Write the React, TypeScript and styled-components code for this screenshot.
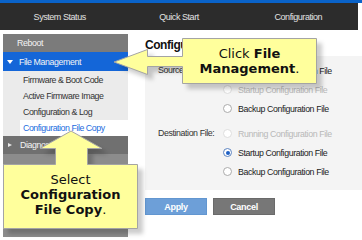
import React from "react";
import styled, { createGlobalStyle } from "styled-components";

const GlobalStyle = createGlobalStyle`
  html, body {
    margin: 0;
    padding: 0;
    background: #ffffff;
  }
  body {
    font-family: "Liberation Sans", Arial, sans-serif;
    overflow: hidden;
  }
`;

const Page = styled.div`
  position: relative;
  width: 362px;
  height: 240px;
  overflow: hidden;
  background: #fff;
`;

const TopStrip = styled.div`
  height: 3px;
  background: #0a63c9;
`;

const NavBar = styled.nav`
  display: grid;
  grid-template-columns: repeat(3, 1fr);
  width: 358px;
  height: 27px;
  background: #2c2c2c;
`;

const NavTab = styled.div`
  display: flex;
  align-items: center;
  justify-content: center;
  color: #e2e2e2;
  font-size: 9px;
  letter-spacing: -0.45px;
`;

const Body = styled.div`
  display: flex;
  gap: 17px;
  padding-top: 4px;
`;

const Sidebar = styled.aside`
  display: flex;
  flex-direction: column;
  width: 125px;
  height: 203px;
  margin-left: 3px;
  background: #8c8c8c;
`;

const MenuHeader = styled.div<{ $tone: "gray" | "active" | "dark"; $h: number }>`
  display: flex;
  align-items: center;
  gap: 6px;
  height: ${(p) => p.$h}px;
  padding-left: ${(p) => (p.$tone === "gray" ? 14 : 4)}px;
  color: #f4f4f4;
  font-size: 8.8px;
  letter-spacing: -0.4px;
  white-space: nowrap;
  background: ${(p) =>
    p.$tone === "active" ? "#1466d8" : p.$tone === "dark" ? "#707070" : "#7b7b7b"};
`;

const Caret = styled.span<{ $open: boolean }>`
  width: 0;
  height: 0;
  margin-left: ${(p) => (p.$open ? 0 : 1)}px;
  margin-right: ${(p) => (p.$open ? 0 : 2)}px;
  border-style: solid;
  border-color: transparent;
  ${(p) =>
    p.$open
      ? "border-width: 4px 3px 0 3px; border-top-color: #fff;"
      : "border-width: 2.5px 0 2.5px 4px; border-left-color: #e8e8e8;"}
`;

const SubMenu = styled.div`
  display: flex;
  flex-direction: column;
  padding: 1px 0 0 17px;
  background: #ebebeb;
`;

const SubItem = styled.div<{ $active?: boolean }>`
  height: 16px;
  padding-left: 3px;
  line-height: 16px;
  font-size: 8.8px;
  letter-spacing: -0.45px;
  white-space: nowrap;
  color: ${(p) => (p.$active ? "#1a6be0" : "#333")};
  background: ${(p) => (p.$active ? "#ffffff" : "transparent")};
`;

const Main = styled.main`
  flex: 1;
  display: flex;
  flex-direction: column;
`;

const Title = styled.h1`
  margin: 0;
  height: 22px;
  line-height: 22px;
  font-size: 12px;
  letter-spacing: -0.45px;
  font-weight: bold;
  color: #111;
  white-space: nowrap;
`;

const Panel = styled.section`
  display: flex;
  flex-direction: column;
  gap: 6px;
  padding: 5px 0 9px 13px;
  background: #f4f4f4;
`;

const FieldRow = styled.div`
  display: grid;
  grid-template-columns: 65px 1fr;
`;

const Label = styled.div`
  height: 19px;
  line-height: 19px;
  font-size: 8.8px;
  letter-spacing: -0.4px;
  white-space: nowrap;
  color: #333;
`;

const Options = styled.div`
  display: flex;
  flex-direction: column;
`;

const Option = styled.label<{ $disabled?: boolean }>`
  display: flex;
  align-items: center;
  gap: 6px;
  height: 19px;
  font-size: 8.8px;
  letter-spacing: -0.4px;
  white-space: nowrap;
  color: ${(p) => (p.$disabled ? "#b8b8b8" : "#222")};
`;

const Radio = styled.span<{ $checked?: boolean; $disabled?: boolean }>`
  position: relative;
  box-sizing: border-box;
  width: 9px;
  height: 9px;
  border-radius: 50%;
  background: #fff;
  border: 1px solid
    ${(p) => (p.$checked ? "#5b83c0" : p.$disabled ? "#dedede" : "#ababab")};
  &::after {
    content: "";
    display: ${(p) => (p.$checked ? "block" : "none")};
    position: absolute;
    left: 1.5px;
    top: 1.5px;
    width: 4px;
    height: 4px;
    border-radius: 50%;
    background: #1d5fc4;
  }
`;

const Actions = styled.div`
  display: flex;
  gap: 6px;
  margin-top: 8px;
`;

const Button = styled.button<{ $primary?: boolean }>`
  width: 62px;
  height: 17px;
  padding: 0;
  border: 1px solid ${(p) => (p.$primary ? "#6296d0" : "#6a6a6a")};
  background: ${(p) => (p.$primary ? "#6d9fd8" : "#777777")};
  color: #fff;
  font-family: inherit;
  font-size: 9px;
  letter-spacing: -0.3px;
  font-weight: bold;
`;

const CalloutWrap = styled.div<{ $x: number; $y: number; $w: number; $h: number }>`
  position: absolute;
  left: ${(p) => p.$x}px;
  top: ${(p) => p.$y}px;
  width: ${(p) => p.$w}px;
  height: ${(p) => p.$h}px;
`;

const CalloutShape = styled.svg`
  position: absolute;
  inset: 0;
  overflow: visible;
  filter: drop-shadow(5px 5px 2px rgba(0, 0, 0, 0.2));
`;

const CalloutText = styled.div<{ $x: number; $y: number; $w: number; $h: number }>`
  position: absolute;
  left: ${(p) => p.$x}px;
  top: ${(p) => p.$y}px;
  width: ${(p) => p.$w}px;
  height: ${(p) => p.$h}px;
  display: flex;
  flex-direction: column;
  align-items: center;
  justify-content: center;
  font-family: "DejaVu Sans", Verdana, sans-serif;
  font-size: 13px;
  line-height: 15px;
  color: #111;
  text-align: center;
`;

type Box = { x: number; y: number; w: number; h: number };

const Callout = ({
  frame,
  box,
  path,
  children,
}: {
  frame: Box;
  box: Box;
  path: string;
  children: React.ReactNode;
}) => (
  <CalloutWrap $x={frame.x} $y={frame.y} $w={frame.w} $h={frame.h}>
    <CalloutShape
      width={frame.w}
      height={frame.h}
      viewBox={`${frame.x} ${frame.y} ${frame.w} ${frame.h}`}
    >
      <path d={path} fill="#ffff9c" stroke="#a4a4a4" strokeWidth="1" />
    </CalloutShape>
    <CalloutText $x={box.x - frame.x} $y={box.y - frame.y} $w={box.w} $h={box.h}>
      {children}
    </CalloutText>
  </CalloutWrap>
);

type Opt = { text: string; checked?: boolean; disabled?: boolean };

const sourceOptions: Opt[] = [
  { text: "Running Configuration File", checked: true },
  { text: "Startup Configuration File", disabled: true },
  { text: "Backup Configuration File" },
];

const destOptions: Opt[] = [
  { text: "Running Configuration File", disabled: true },
  { text: "Startup Configuration File", checked: true },
  { text: "Backup Configuration File" },
];

const RadioGroup = ({ label, options }: { label: string; options: Opt[] }) => (
  <FieldRow>
    <Label>{label}</Label>
    <Options>
      {options.map((o) => (
        <Option key={o.text} $disabled={o.disabled}>
          <Radio $checked={o.checked} $disabled={o.disabled} />
          {o.text}
        </Option>
      ))}
    </Options>
  </FieldRow>
);

export default function App() {
  return (
    <Page>
      <GlobalStyle />
      <TopStrip />
      <NavBar>
        <NavTab>System Status</NavTab>
        <NavTab>Quick Start</NavTab>
        <NavTab>Configuration</NavTab>
      </NavBar>
      <Body>
        <Sidebar>
          <MenuHeader $tone="gray" $h={18}>
            Reboot
          </MenuHeader>
          <MenuHeader $tone="active" $h={19}>
            <Caret $open />
            File Management
          </MenuHeader>
          <SubMenu>
            <SubItem>Firmware &amp; Boot Code</SubItem>
            <SubItem>Active Firmware Image</SubItem>
            <SubItem>Configuration &amp; Log</SubItem>
            <SubItem $active>Configuration File Copy</SubItem>
          </SubMenu>
          <MenuHeader $tone="dark" $h={18}>
            <Caret $open={false} />
            Diagnostics
          </MenuHeader>
        </Sidebar>
        <Main>
          <Title>Configuration File Copy</Title>
          <Panel>
            <RadioGroup label="Source File:" options={sourceOptions} />
            <RadioGroup label="Destination File:" options={destOptions} />
          </Panel>
          <Actions>
            <Button $primary>Apply</Button>
            <Button>Cancel</Button>
          </Actions>
        </Main>
      </Body>

      <Callout
        frame={{ x: 110, y: 36, w: 212, h: 52 }}
        box={{ x: 182, y: 38, w: 135, h: 46 }}
        path="M182.5,38.5 H316.5 V83.5 H182.5 V66.5 H147.5 V74.5 L114,62 L147.5,49.5 V56.5 H182.5 Z"
      >
        <span>
          Click <b>File</b>
        </span>
        <span>
          <b>Management</b>.
        </span>
      </Callout>

      <Callout
        frame={{ x: 0, y: 128, w: 142, h: 105 }}
        box={{ x: 3, y: 164, w: 135, h: 61 }}
        path="M3.5,164.5 H55.5 V148.5 H40 L71,131 L102,148.5 H87.5 V164.5 H137.5 V228.5 H3.5 Z"
      >
        <span>Select</span>
        <b>Configuration</b>
        <span>
          <b>File Copy</b>.
        </span>
      </Callout>
    </Page>
  );
}
